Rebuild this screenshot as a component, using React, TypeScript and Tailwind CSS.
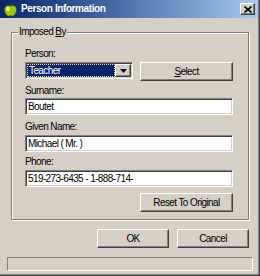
import React from 'react';

const font = "font-['Liberation_Sans',Arial,sans-serif]";

const raised =
  'bg-[#d4d0c8] border border-t-white border-l-white border-r-[#404040] border-b-[#404040] shadow-[inset_-1px_-1px_0_#808080,inset_1px_1px_0_#d4d0c8]';

const sunken =
  'bg-white border border-t-[#808080] border-l-[#808080] border-r-white border-b-white shadow-[inset_1px_1px_0_#404040,inset_-1px_-1px_0_#d4d0c8]';

const txt = 'text-[10px] tracking-[-0.6px] text-black';

const AppleIcon: React.FC = () => (
  <svg width="15" height="15" viewBox="0 0 15 15">
    <path d="M7 3.5 C8 1.5 9.5 1 11 1.2 C10.5 2.8 9 3.6 7.6 3.8 Z" fill="#2f5a10" />
    <path
      d="M7.5 4.2 C5.5 3 2 3.4 1.6 7.2 C1.3 10.8 3.8 14 5.6 14 C6.6 14 7 13.5 7.5 13.5 C8 13.5 8.4 14 9.4 14 C11.2 14 13.7 10.8 13.4 7.2 C13 3.4 9.5 3 7.5 4.2 Z"
      fill="#9cc61a"
      stroke="#4c6d08"
      strokeWidth="0.8"
    />
    <ellipse cx="5" cy="7" rx="1.8" ry="2.3" fill="#e4f27a" />
  </svg>
);

const Label: React.FC<{ children: React.ReactNode; className?: string }> = ({ children, className }) => (
  <div className={`h-[12px] leading-[12px] ${txt} ${className ?? ''}`}>{children}</div>
);

const TextBox: React.FC<{ value: string; className?: string }> = ({ value, className }) => (
  <div className={`h-[17px] w-[208px] ${sunken} pl-[2px] ${txt} leading-[15px] whitespace-nowrap overflow-hidden ${className ?? ''}`}>
    {value}
  </div>
);

const Button: React.FC<{ children: React.ReactNode; className?: string }> = ({ children, className }) => (
  <div className={`h-[19px] ${raised} flex items-center justify-center ${txt} ${className ?? ''}`}>
    {children}
  </div>
);

export default function App() {
  return (
    <div
      className={`relative w-[260px] h-[276px] bg-[#d4d0c8] ${font} shadow-[inset_-1px_-1px_0_#404040,inset_-2px_-2px_0_#808080] overflow-hidden`}
    >
      {/* title bar */}
      <div className="h-[18px] w-[258px] flex items-center bg-gradient-to-r from-[#0a246a] to-[#a6caf0]">
        <div className="ml-[3px] w-[15px] h-[15px]">
          <AppleIcon />
        </div>
        <span className="ml-[3px] text-[10px] tracking-[-0.4px] font-bold text-white leading-none">Person Information</span>
        <div className={`ml-auto mr-[3px] w-[15px] h-[12px] ${raised} flex items-center justify-center`}>
          <svg width="8" height="7" viewBox="0 0 8 7">
            <path d="M0.5 0.5 L7.5 6.5 M7.5 0.5 L0.5 6.5" stroke="#000" strokeWidth="1.6" />
          </svg>
        </div>
      </div>

      {/* group box */}
      <div className="relative ml-[11px] mt-[14px] w-[238px] h-[188px] border border-[#808080] shadow-[inset_1px_1px_0_#fff,1px_1px_0_#fff] pl-[13px] pt-[15px]">
        <div className={`absolute left-[6px] top-[-7px] px-[1px] bg-[#d4d0c8] ${txt} leading-[12px]`}>
          Imposed <span className="underline">B</span>y
        </div>

        <Label>Person:</Label>
        <div className="mt-[2px] flex items-start">
          <div className={`h-[17px] w-[108px] ${sunken} flex p-[1px]`}>
            <div className={`flex-1 bg-[#0a246a] border border-dotted border-[#f5db95] ${txt} !text-white leading-[11px] pl-[1px]`}>
              Teacher
            </div>
            <div className={`w-[16px] h-[13px] ${raised} flex items-center justify-center`}>
              <svg width="7" height="4" viewBox="0 0 7 4">
                <path d="M0 0 H7 L3.5 4 Z" fill="#000" />
              </svg>
            </div>
          </div>
          <Button className="ml-[7px] w-[93px]">
            <span>
              <span className="underline">S</span>elect
            </span>
          </Button>
        </div>

        <Label className="mt-[4px]">Surname:</Label>
        <TextBox className="mt-[1px]" value="Boutet" />

        <Label className="mt-[6px]">Given Name:</Label>
        <TextBox className="mt-[2px]" value="Michael ( Mr. )" />

        <Label className="mt-[4px]">Phone:</Label>
        <TextBox className="mt-[2px]" value="519-273-6435 - 1-888-714-" />

        <div className="mt-[6px] w-[208px] flex justify-end">
          <Button className="w-[93px]">Reset To Original</Button>
        </div>
      </div>

      {/* dialog buttons */}
      <div className="mt-[9px] w-[249px] flex justify-end gap-[8px]">
        <Button className="w-[72px]">OK</Button>
        <Button className="w-[72px]">Cancel</Button>
      </div>

      {/* status bar */}
      <div className="ml-[7px] mt-[9px] w-[246px] h-[14px] border border-t-[#808080] border-l-[#808080] border-r-white border-b-white" />
    </div>
  );
}
